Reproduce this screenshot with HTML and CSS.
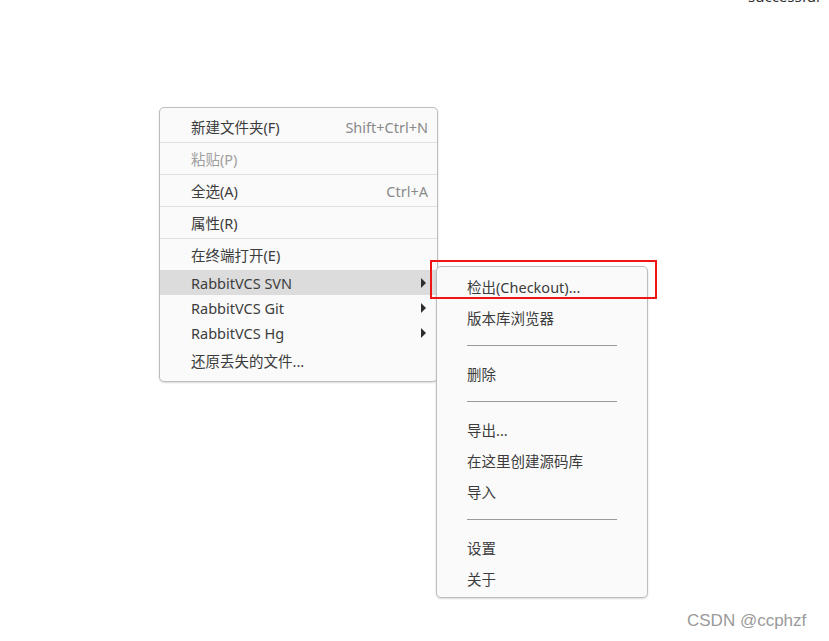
FILE: index.html
```html
<!DOCTYPE html>
<html lang="zh-CN">
<head>
  <meta charset="UTF-8" />
  <title>右键菜单</title>
  <link rel="stylesheet" href="styles.css">
</head>
<body>
  <div class="clipped-text">successful</div>

  <div class="menu main-menu">
    <div class="item lined"><span>新建文件夹(F)</span><span class="accel">Shift+Ctrl+N</span></div>
    <div class="item lined disabled"><span>粘贴(P)</span></div>
    <div class="item lined"><span>全选(A)</span><span class="accel">Ctrl+A</span></div>
    <div class="item lined"><span>属性(R)</span></div>
    <div class="item"><span>在终端打开(E)</span></div>
    <div class="item sub active"><span>RabbitVCS SVN</span><span class="arrow"></span></div>
    <div class="item sub"><span>RabbitVCS Git</span><span class="arrow"></span></div>
    <div class="item sub"><span>RabbitVCS Hg</span><span class="arrow"></span></div>
    <div class="item"><span>还原丢失的文件...</span></div>
  </div>

  <div class="menu submenu">
    <div class="item"><span>检出(Checkout)...</span></div>
    <div class="item"><span>版本库浏览器</span></div>
    <div class="sep"></div>
    <div class="item"><span>删除</span></div>
    <div class="sep"></div>
    <div class="item"><span>导出...</span></div>
    <div class="item"><span>在这里创建源码库</span></div>
    <div class="item"><span>导入</span></div>
    <div class="sep"></div>
    <div class="item"><span>设置</span></div>
    <div class="item"><span>关于</span></div>
  </div>

  <div class="mark"></div>

  <div class="watermark">CSDN @ccphzf</div>
</body>
</html>
```

FILE: styles.css
```css
html, body {
  margin: 0;
  padding: 0;
}
body {
  width: 829px;
  height: 641px;
  position: relative;
  overflow: hidden;
  background: #fff;
  font-family: "Noto Sans", "Noto Sans CJK SC", sans-serif;
  font-size: 14.5px;
  color: #3c3c3c;
}
.clipped-text {
  position: absolute;
  left: 748px;
  top: -14px;
  font-size: 15px;
  line-height: 20px;
  color: #333;
}
.menu {
  position: absolute;
  box-sizing: border-box;
  background: #fafafa;
  border: 1px solid #bdbdbd;
  border-radius: 5px;
  box-shadow: 0 1px 2px rgba(0,0,0,0.15);
}
.main-menu {
  left: 159px;
  top: 107px;
  width: 279px;
  padding: 3px 0 5px;
}
.submenu {
  left: 436px;
  top: 266px;
  width: 212px;
  padding: 4px 0 3px;
}
.item {
  display: flex;
  align-items: center;
  justify-content: space-between;
  height: 31px;
  padding: 0 9px 0 31px;
  box-sizing: border-box;
  white-space: nowrap;
}
.submenu .item {
  padding-left: 30px;
}
.item.lined {
  height: 32px;
  border-bottom: 1px solid #e3e3e3;
}
.item.sub {
  height: 25px;
  padding-right: 11px;
}
.item.active {
  background: #dcdcdc;
}
.item.disabled {
  color: #a0a0a0;
}
.accel {
  color: #8a8a8a;
}
.arrow {
  width: 0;
  height: 0;
  border-top: 5px solid transparent;
  border-bottom: 5px solid transparent;
  border-left: 5px solid #2e2e2e;
}
.sep {
  height: 25px;
  display: flex;
  align-items: center;
  padding-left: 30px;
}
.sep::after {
  content: "";
  width: 150px;
  height: 1px;
  background: #9a9a9a;
}
.mark {
  position: absolute;
  left: 430px;
  top: 260px;
  width: 227px;
  height: 39px;
  box-sizing: border-box;
  border: 2px solid #f01414;
}
.watermark {
  position: absolute;
  left: 687px;
  top: 611px;
  font-family: "Liberation Sans", Arial, sans-serif;
  font-size: 17px;
  color: #9a9a9a;
}
```
